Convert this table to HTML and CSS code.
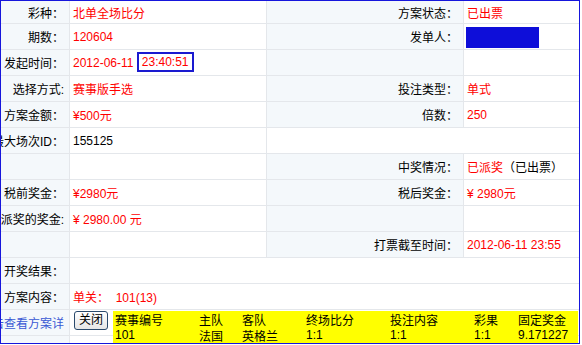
FILE: index.html
```html
<!DOCTYPE html>
<html lang="zh-CN">
<head>
<meta charset="utf-8">
<title>方案详情</title>
<link rel="stylesheet" href="styles.css">
</head>
<body>
<div class="box">
  <div class="grid">
    <div class="lab">彩种：</div>
    <div class="val red">北单全场比分</div>
    <div class="lab">方案状态：</div>
    <div class="val red">已出票</div>

    <div class="lab">期数：</div>
    <div class="val red">120604</div>
    <div class="lab">发单人：</div>
    <div class="val"><span class="user"></span></div>

    <div class="lab">发起时间：</div>
    <div class="val red">2012-06-11&nbsp;<span class="time">23:40:51</span></div>
    <div class="lab"></div>
    <div class="val"></div>

    <div class="lab">选择方式:</div>
    <div class="val red">赛事版手选</div>
    <div class="lab">投注类型：</div>
    <div class="val red">单式</div>

    <div class="lab">方案金额：</div>
    <div class="val red">¥500元</div>
    <div class="lab">倍数：</div>
    <div class="val red">250</div>

    <div class="lab">最大场次ID：</div>
    <div class="val">155125</div>
    <div class="val span2"></div>

    <div class="lab"></div>
    <div class="val"></div>
    <div class="lab">中奖情况：</div>
    <div class="val"><span class="red">已派奖</span>（已出票）</div>

    <div class="lab">税前奖金：</div>
    <div class="val red">¥2980元</div>
    <div class="lab">税后奖金：</div>
    <div class="val red">¥ 2980元</div>

    <div class="lab">派奖的奖金:</div>
    <div class="val red">¥ 2980.00 元</div>
    <div class="lab"></div>
    <div class="val"></div>

    <div class="lab"></div>
    <div class="val"></div>
    <div class="lab">打票截至时间：</div>
    <div class="val red">2012-06-11 23:55</div>

    <div class="lab">开奖结果：</div>
    <div class="val span3"></div>

    <div class="lab">方案内容：</div>
    <div class="val span3 red">单关：&nbsp;&nbsp;101(13)</div>

    <div class="lab"><a class="link" href="#">点击查看方案详</a></div>
    <div class="val span3 top"><button class="btn" type="button">关闭</button></div>

    <div class="lab"></div>
    <div class="val span3"></div>
  </div>

  <div class="popup">
    <span>赛事编号</span><span>主队</span><span>客队</span><span>终场比分</span><span>投注内容</span><span>彩果</span><span>固定奖金</span>
    <span>101</span><span>法国</span><span>英格兰</span><span>1:1</span><span>1:1</span><span>1:1</span><span>9.171227</span>
  </div>
</div>
</body>
</html>
```

FILE: styles.css
```css
html, body {
  margin: 0;
  padding: 0;
  background: #ffffff;
}

body {
  font-family: "Liberation Sans", "Noto Sans CJK SC", sans-serif;
  font-size: 12px;
  color: #000000;
  text-spacing-trim: space-all;
}

.box {
  position: relative;
  width: 578px;
  height: 342px;
  border: 1px solid #1616dc;
  overflow: hidden;
}

.grid {
  display: grid;
  grid-template-columns: 68px 196px 196px 115px;
  grid-template-rows: 22px repeat(12, 25px) 7px;
  column-gap: 1px;
  row-gap: 1px;
  background: #e4e7eb;
  height: 342px;
}

.lab {
  background: #f4f8fb;
  display: flex;
  align-items: center;
  justify-content: flex-end;
  padding-right: 5px;
  white-space: nowrap;
  overflow: hidden;
}

.val {
  background: #ffffff;
  display: flex;
  align-items: center;
  padding-left: 3px;
  white-space: nowrap;
  overflow: hidden;
}

.val.top {
  align-items: flex-start;
  padding-top: 1px;
  padding-left: 4px;
}

.span2 { grid-column: span 2; }
.span3 { grid-column: span 3; }

.red { color: #ff0000; }

.user {
  display: inline-block;
  width: 73px;
  height: 21px;
  margin-left: -1px;
  margin-top: 1px;
  background: #0e0ed9;
}

.time {
  display: inline-block;
  border: 2px solid #1a1ad0;
  padding: 1px 3px;
  line-height: 14px;
  margin-top: -1px;
}

.link {
  color: #3a58d4;
  text-decoration: none;
}

.btn {
  box-sizing: border-box;
  height: 19px;
  padding: 0 4px;
  font-family: "Liberation Sans", "Noto Sans CJK SC", sans-serif;
  font-size: 12px;
  line-height: 15px;
  color: #000000;
  border: 1px solid #2a4a6c;
  border-radius: 3px;
  background: linear-gradient(#ffffff, #e6e6e6);
}

.popup {
  position: absolute;
  left: 112px;
  top: 310px;
  width: 463px;
  height: 32px;
  padding-left: 2px;
  background: #ffff00;
  display: grid;
  grid-template-columns: 84px 43px 64px 84px 84px 44px 1fr;
  grid-template-rows: 16px 16px;
  align-items: center;
  white-space: nowrap;
}
```
